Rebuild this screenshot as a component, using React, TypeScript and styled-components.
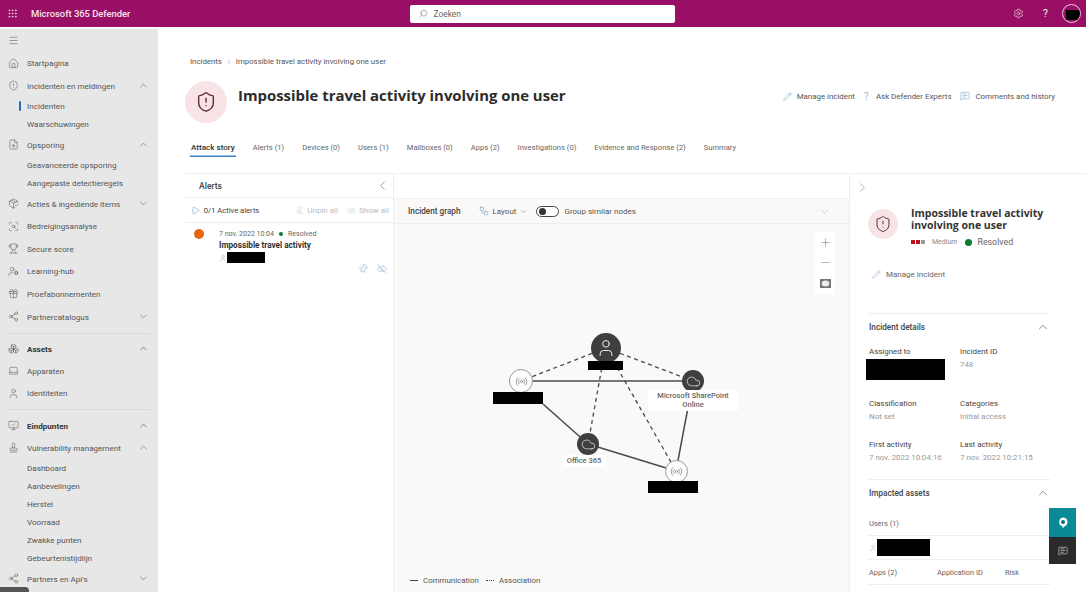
import React from "react";
import styled, { createGlobalStyle } from "styled-components";
import {
  Home, ShieldAlert, FileSearch, ChevronUp, ChevronDown, ChevronLeft, ChevronRight, Menu, Search, Settings,
  PackageCheck, ScanSearch, Trophy, UserCog, Gift, Share2, Boxes, Laptop, User, MonitorCheck, Stamp,
  Pencil, MessageSquareText, Play, PinOff, Eye, Pin, EyeOff, Workflow, Plus, Minus, Cloud, Radio, Grip,
} from "lucide-react";

const Global = createGlobalStyle`
  html, body { margin: 0; padding: 0; height: 100%; overflow: hidden; background: #fff; }
  body { font-family: Roboto, "Liberation Sans", sans-serif; color: #444; }
  #root { height: 592px; width: 1086px; overflow: hidden; }
  * { box-sizing: border-box; }
`;

const Page = styled.div`display: flex; flex-direction: column; width: 1086px; height: 592px;`;
const TopBar = styled.header`
  height: 27px; flex: none; background: #980f65; color: #fff; display: grid;
  grid-template-columns: 1fr 265px 1fr; align-items: center; padding: 0 9px 0 7px;
`;
const Brand = styled.div`display: flex; align-items: center; gap: 13px; font-size: 9.4px; font-weight: 500; color: #f8e6f0;`;
const SearchBox = styled.div`
  height: 18px; background: #fff; border-radius: 2px; display: flex; align-items: center; gap: 6px;
  padding-left: 9px; font-size: 8.4px; color: #666;
  svg { transform: scaleX(-1); }
`;
const TopIcons = styled.div`display: flex; align-items: center; justify-content: flex-end; gap: 19px; color: #eed; font-size: 11px;`;
const Avatar = styled.div`
  width: 19px; height: 19px; border-radius: 50%; border: 1px solid #f0c8e0; position: relative; overflow: hidden; margin: 0 -4px 0 -5px;
  &::after { content: ""; position: absolute; left: 3px; right: 0; top: 5px; bottom: 2px; background: #000; }
`;
const Body = styled.div`flex: 1; display: flex; min-height: 0; padding-top: 2px;`;
const Side = styled.nav`width: 158px; flex: none; background: #e7e7e7; display: flex; flex-direction: column; position: relative;`;
const SideRow = styled.div<{ $h: number; $sub?: boolean; $bold?: boolean }>`
  height: ${(p) => p.$h}px; flex: none; display: flex; align-items: center; position: relative;
  padding-left: ${(p) => (p.$sub ? 27 : 8)}px; padding-right: 9px; font-size: 8.1px; color: ${(p) => (p.$bold ? "#333" : "#555")};
  font-weight: ${(p) => (p.$bold ? 700 : 400)}; white-space: nowrap;
`;
const SideIcon = styled.span`width: 19px; display: flex; color: #5a5a5a; flex: none;`;
const SideLabel = styled.span`flex: 1;`;
const ActiveMark = styled.span`position: absolute; left: 19px; top: 4px; bottom: 4px; width: 2px; background: #1f6fb5; border-radius: 1px;`;
const SideRule = styled.div<{ $h: number }>`
  height: ${(p) => p.$h}px; flex: none; display: flex; align-items: center; padding: 0 8px;
  &::after { content: ""; flex: 1; height: 1px; background: #d8d8d8; }
`;
const ScrollThumb = styled.div`position: absolute; left: 0; bottom: 0; width: 29px; height: 5px; background: #555; border-top-right-radius: 4px;`;

const Main = styled.main`flex: 1; min-width: 0; display: flex; flex-direction: column;`;
const Head = styled.div`height: 144px; flex: none; display: flex; flex-direction: column; padding: 0 0 0 32px;`;
const Crumb = styled.div`margin-top: 17px; display: flex; align-items: center; gap: 3px; font-size: 7.8px; color: #555; flex: none; height: 31px;`;
const TitleRow = styled.div`height: 42px; flex: none; display: flex; align-items: center; margin-left: -5px; margin-top: 4px;`;
const Badge = styled.div<{ $s: number }>`
  width: ${(p) => p.$s}px; height: ${(p) => p.$s}px; border-radius: 50%; background: #f8e3e6; color: #5d2a30;
  display: flex; align-items: center; justify-content: center; flex: none;
`;
const Title = styled.h1`margin: 0 0 0 11px; font-family: "Open Sans", sans-serif; font-size: 14.9px; font-weight: 700; color: #2c2c2c; white-space: nowrap; position: relative; top: -7px;`;
const Actions = styled.div`margin-left: auto; padding-right: 31px; display: flex; gap: 9px; font-size: 7.9px; color: #555; position: relative; top: -6px;`;
const Action = styled.span`display: flex; align-items: center; gap: 5px; white-space: nowrap; svg { color: #6a94b8; }`;
const QMark = styled.span`color: #6a94b8; font-size: 10px; width: 7px; font-weight: 300;`;
const Tabs = styled.div`display: flex; gap: 16px; margin-top: 16px; font-size: 7.6px; color: #666;`;
const Tab = styled.span<{ $on?: boolean }>`
  padding: 0 1px 2px; height: 18px; display: flex; align-items: center; white-space: nowrap;
  ${(p) => p.$on && "font-weight: 500; font-size: 8.1px; color: #333; box-shadow: inset 0 -1.5px 0 #3b82c4;"}
`;
const Panels = styled.div`flex: 1; min-height: 0; margin-left: 27px; display: flex; border-top: 1px solid #eee;`;
const AlertsPane = styled.section`width: 209px; flex: none; border-right: 1px solid #ededed;`;
const PaneHead = styled.div`height: 24px; display: flex; align-items: center; justify-content: space-between; padding: 0 3px 0 14px; font-size: 8.6px; color: #444; border-bottom: 1px solid #efefef; font-weight: 500;`;
const AlertBar = styled.div`height: 25px; display: flex; align-items: center; padding: 0 5px 0 6px; font-size: 7.6px; border-bottom: 1px solid #eee; color: #444; white-space: nowrap; svg { flex: none; }`;
const Muted = styled.span<{ $gap: number }>`display: inline-flex; align-items: center; gap: 3px; color: #bbb; font-size: 8px; margin-left: ${(p) => p.$gap}px;`;
const AlertItem = styled.div`display: grid; grid-template-columns: 25px 1fr; padding: 6px 10px 0 9px;`;
const Dot = styled.span`width: 10px; height: 10px; border-radius: 50%; background: #e8650f;`;
const AlertMeta = styled.div`font-size: 7px; color: #666; display: flex; align-items: center; gap: 5px; white-space: nowrap; height: 9px;`;
const Green = styled.i<{ $s: number }>`display: inline-block; width: ${(p) => p.$s}px; height: ${(p) => p.$s}px; border-radius: 50%; background: #0d7a2c;`;
const AlertName = styled.div`font-size: 8.2px; font-weight: 700; color: #333; margin-top: 2px; white-space: nowrap;`;
const PersonRow = styled.div`display: flex; align-items: center; gap: 0; margin-top: 2px; color: #888;`;
const Redact = styled.span<{ $w: number; $h: number }>`display: block; width: ${(p) => p.$w}px; height: ${(p) => p.$h}px; background: #000; flex: none;`;
const AlertTools = styled.div`display: flex; justify-content: flex-end; gap: 9px; margin: 1px -4px 0 0; color: #6a94b8;`;
const TiltedPin = styled(Pin)`transform: rotate(40deg);`;

const GraphPane = styled.section`width: 456px; flex: none; background: #faf9f8; display: flex; flex-direction: column; border-right: 1px solid #eee;`;
const GraphTop = styled.div`height: 24px; flex: none; background: #fff;`;
const GraphBar = styled.div`height: 26px; flex: none; display: flex; align-items: center; padding: 0 18px 0 14px; font-size: 8px; color: #555; border-top: 1px solid #f2f1f0; border-bottom: 1px solid #efeeed; white-space: nowrap;`;
const GraphTitle = styled.span`font-size: 8.2px; font-weight: 500; color: #444; margin-right: 18px;`;
const LayoutBtn = styled.span`display: flex; align-items: center; gap: 3px; margin-right: 8px; svg:first-child { color: #5b8fbb; margin-right: 1px; }`;
const Toggle = styled.span`width: 23px; height: 11px; border-radius: 6px; border: 1px solid #444; background: #fff; margin-right: 5px; padding: 1px 1.5px; display: flex; &::before { content: ""; width: 7px; height: 7px; border-radius: 50%; background: #333; }`;
const Push = styled.span`margin-left: auto; display: flex; color: #aaa;`;
const Canvas = styled.div`position: relative; flex: 1; min-height: 0;`;
const Lines = styled.svg`position: absolute; inset: 0; width: 100%; height: 100%;`;
const Zoom = styled.div`position: absolute; right: 14px; top: 8px; width: 20px; display: flex; flex-direction: column; background: #fff; color: #777;`;
const ZoomBtn = styled.span`height: 20.5px; display: flex; align-items: center; justify-content: center;`;
const Node = styled.div<{ $x: number; $y: number; $r: number; $dark?: boolean }>`
  position: absolute; left: ${(p) => p.$x - p.$r}px; top: ${(p) => p.$y - p.$r}px; width: ${(p) => p.$r * 2}px; height: ${(p) => p.$r * 2}px;
  border-radius: 50%; display: flex; align-items: center; justify-content: center;
  background: ${(p) => (p.$dark ? "#3f3f3f" : "#fdfdfc")}; color: ${(p) => (p.$dark ? "#eee" : "#666")};
  border: ${(p) => (p.$dark ? "none" : "1px solid #999")};
`;
const Pin2 = styled.div<{ $x: number; $y: number }>`position: absolute; left: ${(p) => p.$x}px; top: ${(p) => p.$y}px;`;
const NodeLabel = styled(Pin2)<{ $w: number }>`
  width: ${(p) => p.$w}px; background: #fff; font-size: 7.5px; font-weight: 500; color: #666; text-align: center; line-height: 9px; padding: 1px 0 2px;
`;
const Legend = styled.div`position: absolute; left: 16px; bottom: 7px; display: flex; align-items: center; gap: 5px; font-size: 7.9px; color: #555;`;
const Dash = styled.span<{ $dot?: boolean }>`width: 8px; border-top: 1.5px ${(p) => (p.$dot ? "dotted" : "solid")} #444; margin-left: ${(p) => (p.$dot ? 2 : 0)}px;`;

const Detail = styled.aside`flex: 1; min-width: 0; padding: 0 36px 0 19px; position: relative;`;
const DetailToggle = styled.div`height: 26px; display: flex; align-items: center; margin-left: -14px; color: #888;`;
const DetailHead = styled.div`display: flex; gap: 13px; margin: 9px 0 0 -1px;`;
const DetailTitle = styled.div`font-family: "Open Sans", sans-serif; font-size: 10.5px; font-weight: 700; color: #333; line-height: 12px; margin-top: -2px;`;
const DetailMeta = styled.div`display: flex; align-items: center; gap: 5px; font-size: 7px; color: #888; margin-top: 6px;`;
const Sev = styled.i<{ $off?: boolean }>`width: 4px; height: 4px; background: ${(p) => (p.$off ? "#999" : "#c01018")}; margin-right: -4px;`;
const MediumText = styled.span`margin: 0 3px 0 6px;`;
const ResolvedText = styled.span`font-size: 8.8px; color: #666;`;
const ManageRow = styled.div`display: flex; align-items: center; gap: 5px; font-size: 8px; color: #666; margin: 23px 0 0 3px; svg { color: #6a94b8; }`;
const Section = styled.div<{ $top: number }>`margin-top: ${(p) => p.$top}px; border-top: 1px solid #eee; height: 26px; display: flex; align-items: center; justify-content: space-between; font-size: 8.2px; font-weight: 500; color: #444;`;
const Fields = styled.div`display: grid; grid-template-columns: 91px 1fr; margin-top: 8px;`;
const Field = styled.div<{ $h: number }>`height: ${(p) => p.$h}px; font-size: 7.9px; color: #444; font-weight: 400;`;
const FieldVal = styled.div`font-size: 7.9px; color: #999; margin-top: 4px; white-space: nowrap; font-weight: 400;`;
const RedactOver = styled(Redact)`margin: 3px 0 0 -3px;`;
const TableRow = styled.div<{ $h: number }>`height: ${(p) => p.$h}px; border-bottom: 1px solid #eee; display: flex; align-items: center; font-size: 7.4px; color: #666; white-space: nowrap;`;
const TableHeadText = styled.span`padding-top: 6px;`;
const Col = styled.span<{ $w: number }>`width: ${(p) => p.$w}px; flex: none;`;
const Float = styled.div`position: absolute; right: 10px; top: 334px; width: 27px; display: flex; flex-direction: column;`;
const FloatBtn = styled.span<{ $bg: string; $h: number }>`height: ${(p) => p.$h}px; background: ${(p) => p.$bg}; display: flex; align-items: center; justify-content: center; color: #fff;`;

type Row = { t: "row" | "sub" | "rule"; h: number; label?: string; icon?: React.ElementType; chev?: "up" | "down"; bold?: boolean; active?: boolean };
const nav: Row[] = [
  { t: "row", h: 23, icon: Menu },
  { t: "row", h: 22, label: "Startpagina", icon: Home },
  { t: "row", h: 23, label: "Incidenten en meldingen", icon: ShieldAlert, chev: "up" },
  { t: "sub", h: 18, label: "Incidenten", active: true },
  { t: "sub", h: 18, label: "Waarschuwingen" },
  { t: "row", h: 23, label: "Opsporing", icon: FileSearch, chev: "up" },
  { t: "sub", h: 18, label: "Geavanceerde opsporing" },
  { t: "sub", h: 18, label: "Aangepaste detectieregels" },
  { t: "row", h: 23, label: "Acties & ingediende items", icon: PackageCheck, chev: "down" },
  { t: "row", h: 22, label: "Bedreigingsanalyse", icon: ScanSearch },
  { t: "row", h: 23, label: "Secure score", icon: Trophy },
  { t: "row", h: 22, label: "Learning-hub", icon: UserCog },
  { t: "row", h: 23, label: "Proefabonnementen", icon: Gift },
  { t: "row", h: 23, label: "Partnercatalogus", icon: Share2, chev: "down" },
  { t: "rule", h: 10 },
  { t: "row", h: 21, label: "Assets", icon: Boxes, chev: "up", bold: true },
  { t: "row", h: 23, label: "Apparaten", icon: Laptop },
  { t: "row", h: 22, label: "Identiteiten", icon: User },
  { t: "rule", h: 11 },
  { t: "row", h: 21, label: "Eindpunten", icon: MonitorCheck, chev: "up", bold: true },
  { t: "row", h: 23, label: "Vulnerability management", icon: Stamp, chev: "up" },
  { t: "sub", h: 18, label: "Dashboard" },
  { t: "sub", h: 18, label: "Aanbevelingen" },
  { t: "sub", h: 18, label: "Herstel" },
  { t: "sub", h: 18, label: "Voorraad" },
  { t: "sub", h: 18, label: "Zwakke punten" },
  { t: "sub", h: 18, label: "Gebeurtenistijdlijn" },
  { t: "row", h: 23, label: "Partners en Api's", icon: Share2, chev: "down" },
];
const tabs = ["Attack story", "Alerts (1)", "Devices (0)", "Users (1)", "Mailboxes (0)", "Apps (2)", "Investigations (0)", "Evidence and Response (2)", "Summary"];

const ox = 394, oy = 223;
const P = (x: number, y: number) => `${x - ox},${y - oy}`;
const solid = [[521, 380, 693, 380], [543, 403, 588, 443], [588, 443, 676, 470], [676, 470, 693, 380]];
const dashed = [[606, 347, 521, 380], [606, 347, 693, 380], [603, 360, 588, 443], [606, 347, 676, 470]];

function SideNav() {
  return (
    <Side>
      {nav.map((r, i) => {
        if (r.t === "rule") return <SideRule key={i} $h={r.h} />;
        const I = r.icon;
        return (
          <SideRow key={i} $h={r.h} $sub={r.t === "sub"} $bold={r.bold}>
            {r.active && <ActiveMark />}
            {I && <SideIcon><I size={11} strokeWidth={1.2} /></SideIcon>}
            <SideLabel>{r.label}</SideLabel>
            {r.chev === "up" && <ChevronUp size={11} strokeWidth={1.2} />}
            {r.chev === "down" && <ChevronDown size={11} strokeWidth={1.2} />}
          </SideRow>
        );
      })}
      <ScrollThumb />
    </Side>
  );
}

function FitIcon() {
  return (
    <svg width="11" height="9" viewBox="0 0 11 9">
      <rect width="11" height="9" fill="#777" />
      <ellipse cx="5.5" cy="4.5" rx="3.8" ry="3" fill="#eee" />
    </svg>
  );
}

function BubbleIcon() {
  return (
    <svg width="10" height="12" viewBox="0 0 10 12">
      <path d="M5 0.5a4.5 4.5 0 0 1 1.6 8.7L4.6 11.5V9.3A4.5 4.5 0 0 1 5 0.5z" fill="#fff" />
      <circle cx="5" cy="5" r="2" fill="#0a6f78" />
    </svg>
  );
}

export default function App() {
  return (
    <Page>
      <Global />
      <TopBar>
        <Brand><Grip size={11} strokeWidth={1.6} />Microsoft 365 Defender</Brand>
        <SearchBox><Search size={9} strokeWidth={1.3} />Zoeken</SearchBox>
        <TopIcons><Settings size={11} strokeWidth={1.4} /><span>?</span><Avatar /></TopIcons>
      </TopBar>
      <Body>
        <SideNav />
        <Main>
          <Head>
            <Crumb>Incidents <ChevronRight size={8} strokeWidth={1} /> Impossible travel activity involving one user</Crumb>
            <TitleRow>
              <Badge $s={42}><ShieldAlert size={22} strokeWidth={1.5} /></Badge>
              <Title>Impossible travel activity involving one user</Title>
              <Actions>
                <Action><Pencil size={9} strokeWidth={1.2} />Manage incident</Action>
                <Action><QMark>?</QMark>Ask Defender Experts</Action>
                <Action><MessageSquareText size={10} strokeWidth={1.2} />Comments and history</Action>
              </Actions>
            </TitleRow>
            <Tabs>{tabs.map((t, i) => <Tab key={t} $on={i === 0}>{t}</Tab>)}</Tabs>
          </Head>
          <Panels>
            <AlertsPane>
              <PaneHead>Alerts<ChevronLeft size={15} strokeWidth={1} color="#666" /></PaneHead>
              <AlertBar>
                <Play size={9} strokeWidth={1.2} color="#4f86c0" />&nbsp;&nbsp;0/1 Active alerts
                <Muted $gap={36}><PinOff size={9} strokeWidth={1} />Unpin all</Muted>
                <Muted $gap={9}><Eye size={9} strokeWidth={1} />Show all</Muted>
              </AlertBar>
              <AlertItem>
                <Dot />
                <div>
                  <AlertMeta>7 nov. 2022 10:04 <Green $s={4} /> Resolved</AlertMeta>
                  <AlertName>Impossible travel activity</AlertName>
                  <PersonRow><User size={8} strokeWidth={1} /><Redact $w={38} $h={11} /></PersonRow>
                  <AlertTools><TiltedPin size={10} strokeWidth={1.1} /><EyeOff size={10} strokeWidth={1.1} /></AlertTools>
                </div>
              </AlertItem>
            </AlertsPane>
            <GraphPane>
              <GraphTop />
              <GraphBar>
                <GraphTitle>Incident graph</GraphTitle>
                <LayoutBtn><Workflow size={10} strokeWidth={1.2} />Layout<ChevronDown size={9} strokeWidth={1} /></LayoutBtn>
                <Toggle />Group similar nodes
                <Push><ChevronDown size={13} strokeWidth={1} /></Push>
              </GraphBar>
              <Canvas>
                <Lines>
                  {solid.map((l, i) => <polyline key={i} points={`${P(l[0], l[1])} ${P(l[2], l[3])}`} stroke="#4a4a4a" strokeWidth={1.5} fill="none" />)}
                  {dashed.map((l, i) => <polyline key={i} points={`${P(l[0], l[1])} ${P(l[2], l[3])}`} stroke="#4a4a4a" strokeWidth={1.3} strokeDasharray="4 3.5" fill="none" />)}
                </Lines>
                <Zoom>
                  <ZoomBtn><Plus size={13} strokeWidth={1} /></ZoomBtn>
                  <ZoomBtn><Minus size={13} strokeWidth={1} /></ZoomBtn>
                  <ZoomBtn><FitIcon /></ZoomBtn>
                </Zoom>
                <Node $x={212} $y={124} $r={15} $dark><User size={20} strokeWidth={1.2} /></Node>
                <Node $x={127} $y={157} $r={12}><Radio size={13} strokeWidth={1.1} /></Node>
                <Node $x={299} $y={157} $r={11} $dark><Cloud size={15} strokeWidth={1.1} /></Node>
                <Node $x={194} $y={220} $r={11} $dark><Cloud size={15} strokeWidth={1.1} /></Node>
                <Node $x={282} $y={247} $r={11.5}><Radio size={13} strokeWidth={1.1} /></Node>
                <Pin2 $x={194} $y={137}><Redact $w={35} $h={9} /></Pin2>
                <Pin2 $x={99} $y={168}><Redact $w={50} $h={12} /></Pin2>
                <Pin2 $x={254} $y={257}><Redact $w={50} $h={12} /></Pin2>
                <NodeLabel $x={254} $y={166} $w={90}>Microsoft SharePoint<br />Online</NodeLabel>
                <NodeLabel $x={168} $y={231} $w={44}>Office 365</NodeLabel>
                <Legend><Dash />Communication<Dash $dot />Association</Legend>
              </Canvas>
            </GraphPane>
            <Detail>
              <DetailToggle><ChevronRight size={15} strokeWidth={1} /></DetailToggle>
              <DetailHead>
                <Badge $s={30}><ShieldAlert size={18} strokeWidth={1.3} /></Badge>
                <div>
                  <DetailTitle>Impossible travel activity<br />involving one user</DetailTitle>
                  <DetailMeta><Sev /><Sev /><Sev $off /><MediumText>Medium</MediumText><Green $s={7} /><ResolvedText>Resolved</ResolvedText></DetailMeta>
                </div>
              </DetailHead>
              <ManageRow><Pencil size={9} strokeWidth={1.1} />Manage incident</ManageRow>
              <Section $top={34}>Incident details<ChevronUp size={14} strokeWidth={1} /></Section>
              <Fields>
                <Field $h={52}>Assigned to<RedactOver $w={79} $h={21} /></Field>
                <Field $h={52}>Incident ID<FieldVal>748</FieldVal></Field>
                <Field $h={41}>Classification<FieldVal>Not set</FieldVal></Field>
                <Field $h={41}>Categories<FieldVal>Initial access</FieldVal></Field>
                <Field $h={39}>First activity<FieldVal>7 nov. 2022 10:04:16</FieldVal></Field>
                <Field $h={39}>Last activity<FieldVal>7 nov. 2022 10:21:15</FieldVal></Field>
              </Fields>
              <Section $top={0}>Impacted assets<ChevronUp size={14} strokeWidth={1} /></Section>
              <TableRow $h={31}><TableHeadText>Users (1)</TableHeadText></TableRow>
              <TableRow $h={24}><User size={8} strokeWidth={1} color="#999" /><Redact $w={53} $h={17} /></TableRow>
              <TableRow $h={25}><Col $w={68}>Apps (2)</Col><Col $w={68}>Application ID</Col><Col $w={40}>Risk</Col></TableRow>
              <Float>
                <FloatBtn $bg="#0a8a96" $h={29}><BubbleIcon /></FloatBtn>
                <FloatBtn $bg="#2b2b2b" $h={27}><MessageSquareText size={10} strokeWidth={1.2} /></FloatBtn>
              </Float>
            </Detail>
          </Panels>
        </Main>
      </Body>
    </Page>
  );
}
